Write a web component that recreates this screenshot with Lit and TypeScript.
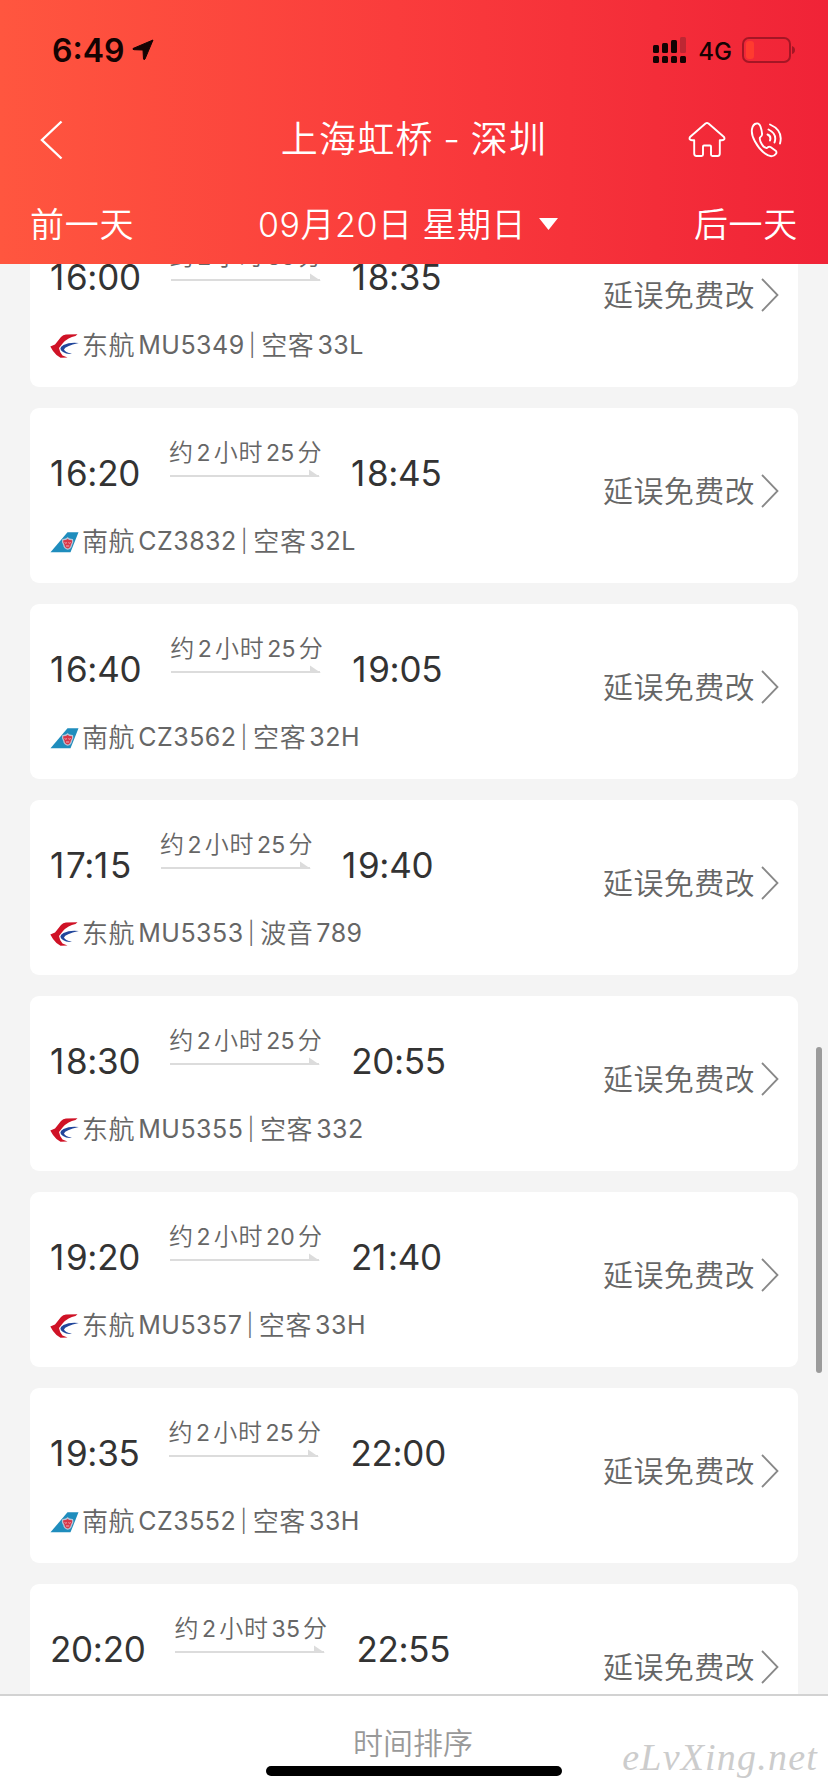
import { LitElement, html, css, svg } from "lit";
import { customElement, property } from "lit/decorators.js";
import { classMap } from "lit/directives/class-map.js";

type Flight = { dep: string; arr: string; mins: string; air: "mu" | "cz"; no: string; maker: string; model: string };

const FLIGHTS: Flight[] = [
  { dep: "16:00", arr: "18:35", mins: "35", air: "mu", no: "MU5349", maker: "空客", model: "33L" },
  { dep: "16:20", arr: "18:45", mins: "25", air: "cz", no: "CZ3832", maker: "空客", model: "32L" },
  { dep: "16:40", arr: "19:05", mins: "25", air: "cz", no: "CZ3562", maker: "空客", model: "32H" },
  { dep: "17:15", arr: "19:40", mins: "25", air: "mu", no: "MU5353", maker: "波音", model: "789" },
  { dep: "18:30", arr: "20:55", mins: "25", air: "mu", no: "MU5355", maker: "空客", model: "332" },
  { dep: "19:20", arr: "21:40", mins: "20", air: "mu", no: "MU5357", maker: "空客", model: "33H" },
  { dep: "19:35", arr: "22:00", mins: "25", air: "cz", no: "CZ3552", maker: "空客", model: "33H" },
  { dep: "20:20", arr: "22:55", mins: "35", air: "mu", no: "MU5359", maker: "空客", model: "33L" },
];

const muLogo = svg`
  <path d="M.3 12.500 L5 10.500 L11 3 Q13 .8 16 .5 L27.500 .3 L25.500 2 Q18 3.500 13 9 L9 14 Q9.500 18 12.500 21.500 L17.500 23.500 L10.500 23.700 Q6 21.500 3 17Z" fill="#cf1226"/>
  <path d="M28.800 9 Q20 7.800 13.500 11 Q7.500 14.500 13 18 Q16.500 20.400 22 19.800 Q14.800 18.200 14 15.500 Q15 12 28.800 9Z" fill="#21469b"/>`;
const czLogo = svg`
  <path d="M.5 22.300 L17.500 2.300 H28.500 L20.500 22.300Z" fill="#1f8dbd"/>
  <path d="M17.600 8 Q19 9.600 22.500 9.700 Q23.500 12 21.500 14.800 Q21 18.500 17.600 19.200 Q14.200 18.500 13.800 14.800 Q11.800 12 12.800 9.700 Q16.200 9.600 17.600 8Z" fill="#d93648" stroke="#b9c2d4" stroke-width="1.300"/>
  <path d="M14.600 12.500 q1.200 1.300 2.300 .2 M18.400 12.700 q1.200 1.100 2.300 -.2 M16 16 h3.200" stroke="#eabfc9" stroke-width=".9" fill="none"/>`;

const clock = (t: string) => html`<span class="time">${[...t].map((c) => html`<span class=${classMap({ one: c === "1" })}>${c}</span>`)}</span>`;

@customElement("flight-card")
export class FlightCard extends LitElement {
  @property({ attribute: false }) flight!: Flight;

  static styles = css`
    :host {
      display: flex;
      justify-content: space-between;
      flex: none;
      height: 175px;
      box-sizing: border-box;
      padding: 0 20px 0 20px;
      border-radius: 9px;
      background: #fff;
      color: #666;
      white-space: nowrap;
    }
    .journey { display: flex; height: 118px; }
    .time { padding-top: 42px; font-size: 35px; line-height: 46px; color: #333; letter-spacing: -0.3px; }
    .one { letter-spacing: 1.7px; }
    .leg { width: 152px; margin: 0 30px 0 29px; padding-top: 30px; }
    .dur { font-size: 24px; line-height: 30px; font-weight: 350; letter-spacing: 0.6px; display: flex; gap: 3px; }
    .num { font-size: 23px; font-weight: 400; letter-spacing: 0.2px; }
    .arrow { display: block; margin-top: 1px; }
    .info { display: flex; align-items: center; height: 31px; font-size: 26px; font-weight: 350; line-height: 31px; letter-spacing: 0.6px; }
    .logo { margin-right: 3px; }
    .code { font-size: 25px; font-weight: 400; letter-spacing: 0.5px; margin-left: 3px; }
    .bar { margin: 0 5px 0 4px; font-size: 22px; }
    .cta { display: flex; align-items: center; height: 34px; margin-top: 66px; font-size: 30px; line-height: 34px; font-weight: 350; letter-spacing: 0.4px; }
    .label { margin-top: -1px; }
    .cta svg { margin-left: 6px; margin-right: -1px; }
  `;

  render() {
    const f = this.flight;
    return html`
      <div>
        <div class="journey">
          ${clock(f.dep)}
          <div class="leg">
            <div class="dur"><span>约</span><span class="num">2</span><span>小时</span><span class="num">${f.mins}</span><span>分</span></div>
            <svg class="arrow" width="151" height="9"><path d="M1 7H150" stroke="#dcdcdc" stroke-width="2"/><path d="M140 .5V8H151Z" fill="#dcdcdc"/></svg>
          </div>
          ${clock(f.arr)}
        </div>
        <div class="info">
          <svg class="logo" width="29" height="24" viewBox="0 0 29 24">${f.air === "mu" ? muLogo : czLogo}</svg>
          <span>${f.air === "mu" ? "东航" : "南航"}</span><span class="code">${f.no}</span><span class="bar">|</span><span>${f.maker}</span><span class="code">${f.model}</span>
        </div>
      </div>
      <div class="cta">
        <span class="label">延误免费改</span>
        <svg width="18" height="34" fill="none" stroke="#888" stroke-width="1.800"><path d="M1 1L16.500 17L1 33"/></svg>
      </div>`;
  }
}

@customElement("app-root")
export class AppRoot extends LitElement {
  static styles = css`
    :host {
      display: flex;
      flex-direction: column;
      position: relative;
      width: 828px;
      height: 1792px;
      overflow: hidden;
      background: #f4f4f4;
      font-family: Inter, "Noto Sans CJK SC", sans-serif;
    }
    .head {
      flex: none;
      height: 264px;
      background: linear-gradient(90deg, #ff563f 0%, #fa3c3c 48%, #f02337 100%);
      color: #fff;
      font-weight: 350;
      white-space: nowrap;
    }
    .status { display: flex; align-items: center; height: 100px; padding: 0 30px 0 52px; color: #140303; }
    .clock { font-size: 32px; font-weight: 600; }
    .loc { margin-left: 8px; }
    .net { margin: 2px 10px 0 11px; font-size: 24px; font-weight: 500; }
    .signal { margin-left: auto; }
    .nav { display: grid; grid-template-columns: 140px 1fr 140px; align-items: center; height: 80px; }
    .back { margin-left: 39px; }
    .title { text-align: center; font-size: 37px; line-height: 44px; letter-spacing: 1.200px; word-spacing: -2px; }
    .tools { display: flex; gap: 24px; }
    .days { display: grid; grid-template-columns: 140px 1fr 140px; align-items: center; height: 84px; font-size: 34px; padding: 0 30px; letter-spacing: 0.7px; }
    .date { display: flex; align-items: center; justify-content: center; padding-right: 12px; letter-spacing: 0.5px; }
    .gap { margin-left: 10px; }
    .tri { margin-left: 13px; margin-top: 3px; }
    .next { text-align: right; }
    .list { flex: 1; min-height: 0; overflow: hidden; display: flex; flex-direction: column; gap: 21px; padding: 0 30px; }
    .list > :first-child { margin-top: -52px; }
    .foot { flex: none; height: 98px; box-sizing: border-box; border-top: 2px solid #d2d2d2; background: #fff; display: flex; flex-direction: column; align-items: center; }
    .sort { margin-top: 26px; margin-right: 2px; font-size: 30px; line-height: 42px; font-weight: 350; color: #999; }
    .home { width: 296px; height: 10px; margin-top: 2px; border-radius: 5px; background: #000; }
    .mark { position: absolute; right: 10px; bottom: 12px; font: italic 400 38px/46px "Liberation Serif", serif; letter-spacing: 1.2px; color: #ccc; }
    .scroll { position: absolute; right: 6px; top: 1047px; width: 6px; height: 326px; border-radius: 3px; background: #9b9b9b; }
  `;

  render() {
    return html`
      <div class="head">
        <div class="status">
          <span class="clock">6:49</span>
          <svg class="loc" width="22" height="22"><path d="M21 1L1 9.500Q.5 10.500 2 10.700L11 11L11.500 20Q12.200 21.500 13 20Z" fill="#140303" stroke="#140303" stroke-linejoin="round"/></svg>
          <svg class="signal" width="34" height="28" fill="#140303">
            <rect x="0" y="9" width="6" height="8" rx="1.500"/><rect x="9" y="7" width="6" height="10" rx="1.500"/><rect x="18" y="4" width="6" height="13" rx="1.500"/><rect x="27" y="1" width="6" height="16" rx="1.500" fill="#bd2733"/>
            <rect x="0" y="20" width="6" height="7" rx="1.500"/><rect x="9" y="20" width="6" height="7" rx="1.500"/><rect x="18" y="20" width="6" height="7" rx="1.500"/><rect x="27" y="20" width="6" height="7" rx="1.500"/>
          </svg>
          <span class="net">4G</span>
          <svg width="56" height="26"><rect x="1" y="1" width="47" height="24" rx="6" fill="none" stroke="#a51625" stroke-width="2"/><rect x="4" y="4" width="8" height="18" rx="3" fill="#ff3b2f"/><path d="M50 9Q53 10 53 13Q53 16 50 17Z" fill="#a51625"/></svg>
        </div>
        <div class="nav">
          <svg class="back" width="24" height="40" fill="none" stroke="#fff" stroke-width="2.4"><path d="M22.500 1.500L3 20L22.500 38.500"/></svg>
          <div class="title">上海虹桥 - 深圳</div>
          <div class="tools">
            <svg width="38" height="36" fill="none" stroke="#fff" stroke-width="1.900" stroke-linejoin="round"><path d="M17.500 1.500Q19 .6 20.500 1.500L36 15Q37.500 18 34 18.200H31.800V31.500Q31.800 34 29.500 34H24.500Q23 34 23 32.500V24.500Q23 23.500 22 23.500H16Q15 23.500 15 24.500V32.500Q15 34 13.500 34H8.500Q6.200 34 6.200 31.500V18.200H4Q.5 18 2 15Z"/></svg>
            <svg width="34" height="36" fill="none" stroke="#fff" stroke-width="1.900" stroke-linecap="round" stroke-linejoin="round"><path d="M6.500 1.500Q3 2 2 7Q1 12.500 5 19.500Q9 27 15 31.500Q20 35.500 24 33.500Q27.500 31.500 26 29L20.500 25Q18.500 24 17 26Q14.500 26.500 12 22.500Q9 17.500 10 15.500Q12.500 14 12 11.500Q12 9 10.500 4.500Q9 .8 6.500 1.500Z"/><path d="M17.500 12.500Q21.500 14 20 18.500M18.500 7.500Q27.500 12 24.500 20.500M20 2.500Q33.500 8.500 30 21.500"/></svg>
          </div>
        </div>
        <div class="days">
          <span>前一天</span>
          <div class="date"><span>09月20日</span><span class="gap">星期日</span><svg class="tri" width="19" height="12"><path d="M0 0H19L9.500 12Z" fill="#fff"/></svg></div>
          <span class="next">后一天</span>
        </div>
      </div>
      <div class="list">${FLIGHTS.map((f) => html`<flight-card .flight=${f}></flight-card>`)}</div>
      <div class="foot">
        <div class="sort">时间排序</div>
        <div class="home"></div>
      </div>
      <div class="mark">eLvXing.net</div>
      <div class="scroll"></div>`;
  }
}
